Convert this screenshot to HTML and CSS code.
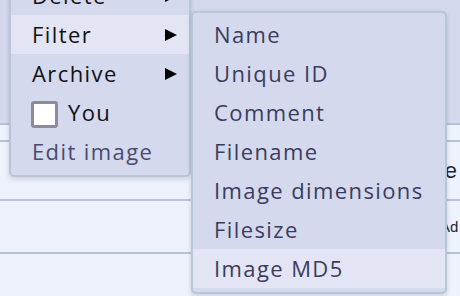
FILE: index.html
```html
<!DOCTYPE html>
<html>
<head>
<meta charset="utf-8">
<link rel="stylesheet" href="styles.css">
</head>
<body>

<!--Page behind the menus-->
<div class="page">
  <div class="band"></div>
  <div class="row short"></div>
  <div class="row tall"><span class="title">Image</span></div>
  <div class="row mid"><span class="small">Ad</span></div>
  <div class="row"></div>
</div>

<!--Context menu-->
<div class="menu mainMenu">
  <div class="item">Delete <span class="arrow"></span></div>
  <div class="item active">Filter <span class="arrow"></span></div>
  <div class="item">Archive <span class="arrow"></span></div>
  <div class="item check"><span class="box"></span>You</div>
  <div class="item muted">Edit image</div>
</div>

<!--Filter submenu-->
<div class="menu subMenu">
  <div class="item">Name</div>
  <div class="item">Unique ID</div>
  <div class="item">Comment</div>
  <div class="item">Filename</div>
  <div class="item">Image dimensions</div>
  <div class="item">Filesize</div>
  <div class="item active">Image MD5</div>
</div>

</body>
</html>
```

FILE: styles.css
```css
html, body {
  margin: 0;
  padding: 0;
  overflow: hidden;
  width: 460px;
  height: 296px;
  background-color: #eef2fd;
  font-family: "Open Sans", sans-serif;
}

/* page */
.page {
  display: flex;
  flex-direction: column;
}

.band {
  height: 123px;
  background-color: #d5d9ee;
  border-bottom: 2px solid #b5c5d6;
}

.row {
  border-bottom: 2px solid #b5c5d6;
  display: flex;
  align-items: center;
  height: 42px;
}

.row.short { height: 15px; }
.row.tall { height: 57px; justify-content: flex-end; }
.row.mid { height: 51px; }

.title {
  font-family: "Liberation Sans", sans-serif;
  font-size: 22px;
  color: #1f2230;
  padding-right: 3px;
  white-space: nowrap;
}

.small {
  font-family: "Liberation Sans", sans-serif;
  font-size: 15px;
  color: #1f2230;
  margin-left: 440px;
  white-space: nowrap;
}

/* menus */
.menu {
  position: absolute;
  background-color: #d5d9ee;
  border: 2px solid #b8c6d8;
  border-radius: 5px;
  padding: 2px 0 4px 0;
  box-shadow: 0 2px 5px rgba(40, 50, 80, 0.18);
}

.mainMenu {
  left: 9px;
  top: -28px;
  width: 178px;
}

.subMenu {
  left: 191px;
  top: 11px;
  width: 252px;
}

.item {
  height: 39px;
  line-height: 39px;
  font-size: 22px;
  letter-spacing: 1.4px;
  padding-left: 21px;
  padding-right: 12px;
  display: flex;
  align-items: center;
  justify-content: space-between;
  white-space: nowrap;
}

.mainMenu .item { color: #111; }
.subMenu .item { color: #3b3c5e; }

.item.active { background-color: #e3e5f5; }
.mainMenu .item.muted { color: #4a4b6e; }

.item.check {
  justify-content: flex-start;
}

.box {
  width: 21px;
  height: 21px;
  border: 3px solid #8b8b9c;
  border-radius: 3px;
  background-color: #fff;
  margin-left: -1px;
  margin-right: 10px;
  margin-top: 4px;
}

.arrow {
  width: 0;
  height: 0;
  border-left: 12px solid #000;
  border-top: 6px solid transparent;
  border-bottom: 6px solid transparent;
}
```
